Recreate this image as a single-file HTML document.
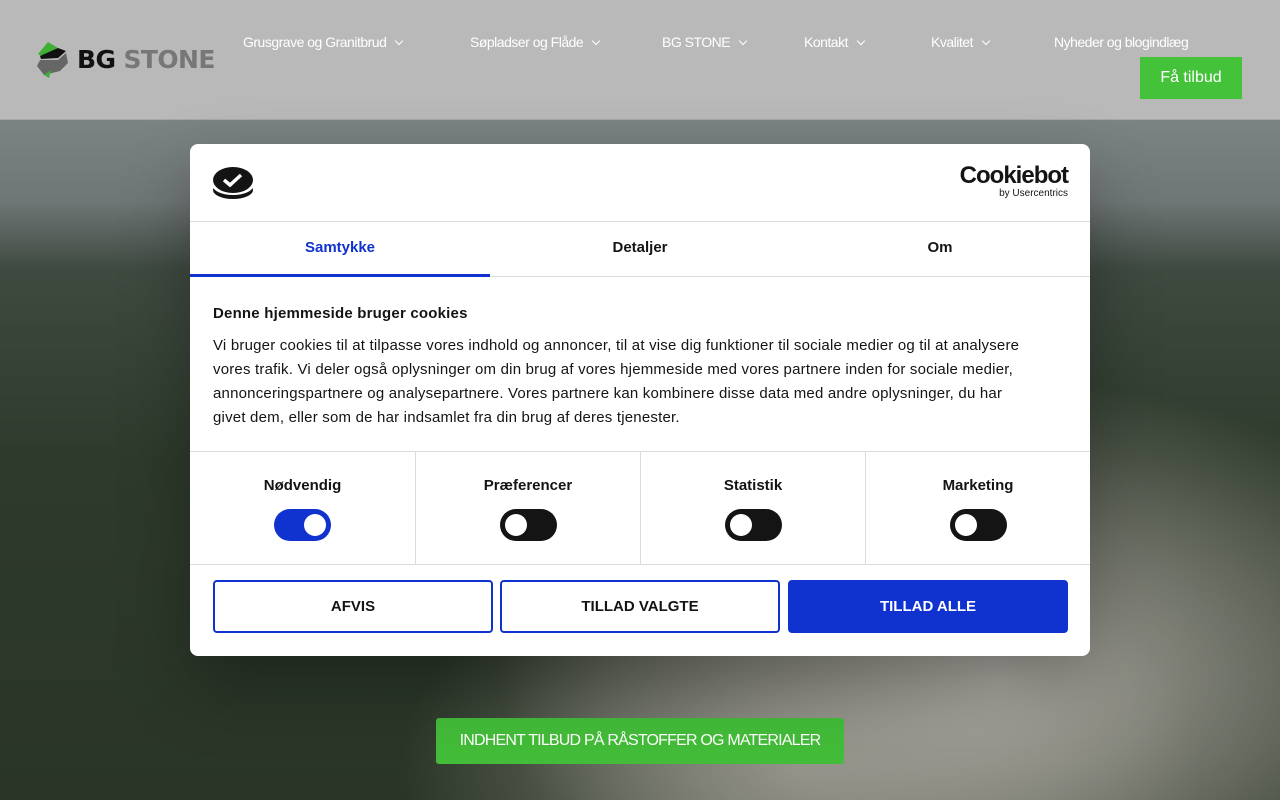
<!DOCTYPE html>
<html><head><meta charset="utf-8"><style>
*{box-sizing:border-box;margin:0;padding:0}
body{width:1280px;height:800px;overflow:hidden;position:relative;font-family:"Liberation Sans",sans-serif;background:#3a4a3a}
.hero{position:absolute;left:0;top:120px;width:1280px;height:680px;
background:
radial-gradient(ellipse 500px 300px at 1000px 560px,rgba(175,172,165,.95),rgba(150,148,140,.5) 60%,rgba(0,0,0,0) 100%),
radial-gradient(ellipse 400px 250px at 800px 650px,rgba(160,158,150,.8),rgba(0,0,0,0) 100%),
linear-gradient(180deg,#7c8383 0%,#6f7676 12%,#3f4a40 22%,#2e3a2c 50%,#2a3527 100%);}
.hdr{position:absolute;left:0;top:0;width:1280px;height:120px;background:#b9b9b9;border-bottom:1px solid #a8a8a8}
.nav{position:absolute;top:34px;color:#fff;font-size:14px;letter-spacing:-.5px}
.nav span.c{display:inline-block;width:6px;height:6px;border-right:1.5px solid #fff;border-bottom:1.5px solid #fff;transform:rotate(45deg);margin-left:10px;position:relative;top:-3px}
.cta{position:absolute;left:1140px;top:57px;width:102px;height:42px;background:#43c23a;color:#fff;font-size:16px;text-align:center;line-height:42px}
.dlg{position:absolute;left:190px;top:144px;width:900px;height:512px;background:#fff;border-radius:8px;box-shadow:0 30px 70px rgba(0,0,0,.3);color:#141414}
.tabs{position:absolute;top:77px;left:0;width:900px;height:56px;border-top:1px solid #dcdcdc;border-bottom:1px solid #dcdcdc}
.tab{position:absolute;top:0;width:300px;height:55px;text-align:center;line-height:52px;font-weight:bold;font-size:15px}
.body{position:absolute;left:23px;top:158px;width:822px;font-size:15px;line-height:24px;letter-spacing:.2px}
.cats{position:absolute;left:0;top:307px;width:900px;height:114px;border-top:1px solid #dcdcdc;border-bottom:1px solid #dcdcdc}
.cat{position:absolute;top:0;width:225px;height:113px;text-align:center;font-weight:bold;font-size:15px;padding-top:25px}
.tg{width:57px;height:32px;border-radius:16px;background:#141414;margin:15px auto 0;position:relative}
.tg::after{content:"";position:absolute;left:5px;top:5px;width:22px;height:22px;border-radius:50%;background:#fff}
.tg.on{background:#1032cf}.tg.on::after{left:30px}
.btn{position:absolute;top:436px;width:280px;height:53px;border:2px solid #1032cf;border-radius:4px;text-align:center;line-height:49px;font-weight:bold;font-size:15px;letter-spacing:0}
</style></head><body>
<div class="hero"></div>
<div style="position:absolute;left:436px;top:718px;width:408px;height:46px;background:#43bd39;border-radius:3px;color:#fff;text-align:center;line-height:46px;font-size:16px;letter-spacing:-.8px">INDHENT TILBUD PÅ RÅSTOFFER OG MATERIALER</div>
<div class="hdr">
<svg style="position:absolute;left:36px;top:41px" width="34" height="38" viewBox="0 0 34 38"><polygon points="12,1 22,7 5,15 2,13" fill="#3fae35"/><polygon points="22,7 30,10 22,17 5,18 4,15" fill="#111"/><polygon points="4,19 22,19 30,12 32,22 24,30 8,34 1,25" fill="#666"/><polygon points="8,34 15,29 13,37" fill="#3fae35"/></svg>
<div style="position:absolute;left:77px;top:44px;font-family:'DejaVu Sans',sans-serif;font-weight:bold;font-size:25px;letter-spacing:-.6px;line-height:32px"><span style="color:#111">BG</span> <span style="color:#777">STONE</span></div>
<div class="nav" style="left:243px">Grusgrave og Granitbrud<span class="c"></span></div>
<div class="nav" style="left:470px">Søpladser og Flåde<span class="c"></span></div>
<div class="nav" style="left:662px">BG STONE<span class="c"></span></div>
<div class="nav" style="left:804px">Kontakt<span class="c"></span></div>
<div class="nav" style="left:931px">Kvalitet<span class="c"></span></div>
<div class="nav" style="left:1054px">Nyheder og blogindlæg</div>
<div class="cta">Få tilbud</div>
</div>
<div class="dlg">
<svg style="position:absolute;left:22px;top:22px" width="42" height="34" viewBox="0 0 42 34"><ellipse cx="21" cy="24" rx="20" ry="9" fill="#141414"/><ellipse cx="21" cy="20" rx="20" ry="9" fill="#fff"/><ellipse cx="21" cy="14" rx="20" ry="13" fill="#141414"/><path d="M12 14l6 5 11-10" stroke="#fff" stroke-width="3.5" fill="none"/></svg>
<div style="position:absolute;right:22px;top:20px;text-align:right;line-height:1"><div style="font-weight:bold;font-size:24px;letter-spacing:-1px">Cookiebot</div><div style="font-size:10px;margin-top:1px">by Usercentrics</div></div>
<div class="tabs">
<div class="tab" style="left:0;color:#1032cf;border-bottom:3px solid #1032cf">Samtykke</div>
<div class="tab" style="left:300px">Detaljer</div>
<div class="tab" style="left:600px">Om</div>
</div>
<div class="body"><div style="font-weight:bold;margin-bottom:8px">Denne hjemmeside bruger cookies</div>Vi bruger cookies til at tilpasse vores indhold og annoncer, til at vise dig funktioner til sociale medier og til at analysere vores trafik. Vi deler også oplysninger om din brug af vores hjemmeside med vores partnere inden for sociale medier, annonceringspartnere og analysepartnere. Vores partnere kan kombinere disse data med andre oplysninger, du har givet dem, eller som de har indsamlet fra din brug af deres tjenester.</div>
<div class="cats">
<div class="cat" style="left:0">Nødvendig<div class="tg on"></div></div>
<div class="cat" style="left:225px;border-left:1px solid #dcdcdc">Præferencer<div class="tg"></div></div>
<div class="cat" style="left:450px;border-left:1px solid #dcdcdc">Statistik<div class="tg"></div></div>
<div class="cat" style="left:675px;border-left:1px solid #dcdcdc">Marketing<div class="tg"></div></div>
</div>
<div class="btn" style="left:23px">AFVIS</div>
<div class="btn" style="left:310px">TILLAD VALGTE</div>
<div class="btn" style="left:598px;background:#1032cf;color:#fff">TILLAD ALLE</div>
</div>
</body></html>
